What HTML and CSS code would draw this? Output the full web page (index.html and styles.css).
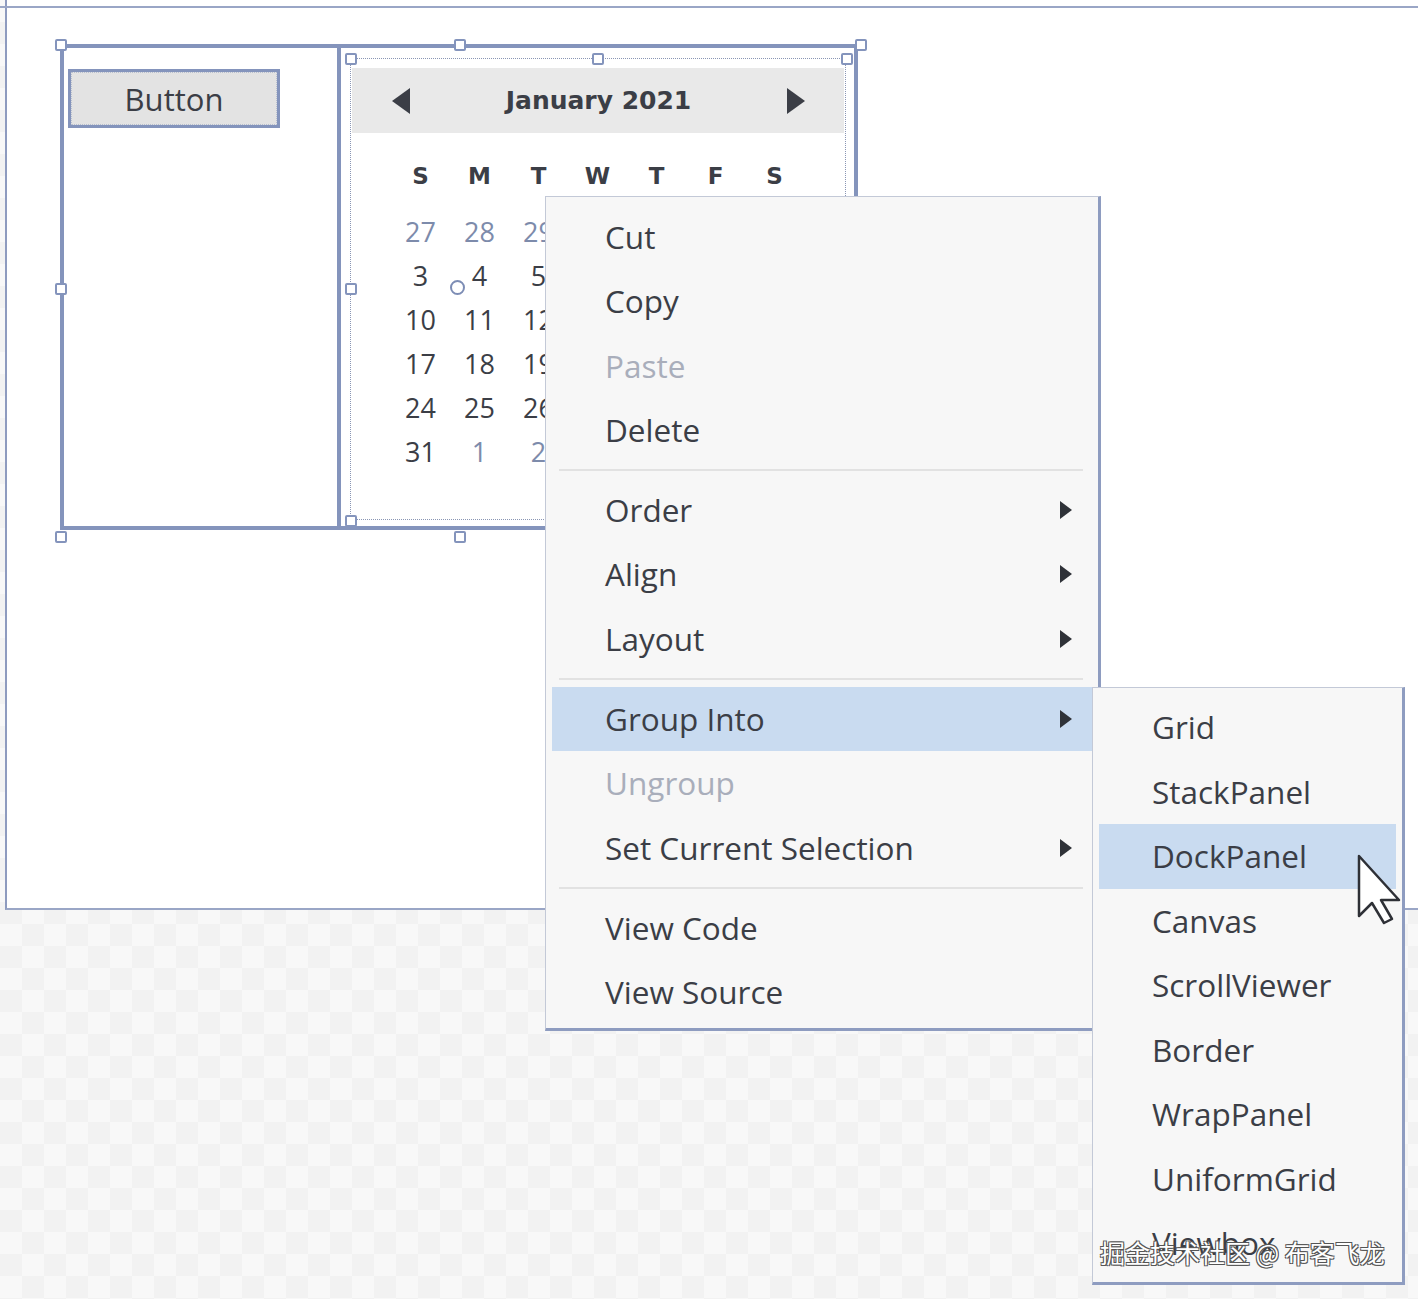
FILE: index.html
```html
<!DOCTYPE html>
<html lang="en">
<head>
    <meta charset="UTF-8">
    <title>Designer - Group Into</title>
    <link rel="stylesheet" href="styles.css">
</head>
<body>
    <div class="stage">
        <div class="window">
            <div class="grid">
                <div class="col-left">
                    <div class="btn">Button</div>
                </div>
                <div class="col-cal">
                    <div class="calendar">
                        <div class="cal-head">
                            <span class="tri tri-left"></span>
                            <span class="cal-title">January 2021</span>
                            <span class="tri tri-right"></span>
                        </div>
                        <div class="cal-week">
                            <span>S</span><span>M</span><span>T</span><span>W</span><span>T</span><span>F</span><span>S</span>
                        </div>
                        <div class="cal-days">
                            <span class="out">27</span><span class="out">28</span><span class="out">29</span><span class="out">30</span><span class="out">31</span><span>1</span><span>2</span>
                            <span>3</span><span>4</span><span>5</span><span>6</span><span>7</span><span>8</span><span>9</span>
                            <span>10</span><span>11</span><span>12</span><span>13</span><span>14</span><span>15</span><span>16</span>
                            <span>17</span><span>18</span><span>19</span><span>20</span><span>21</span><span>22</span><span>23</span>
                            <span>24</span><span>25</span><span>26</span><span>27</span><span>28</span><span>29</span><span>30</span>
                            <span>31</span><span class="out">1</span><span class="out">2</span><span class="out">3</span><span class="out">4</span><span class="out">5</span><span class="out">6</span>
                        </div>
                    </div>
                </div>
            </div>
        </div>

        <!-- selection adorners -->
        <span class="handle" style="left:55px;top:39px"></span>
        <span class="handle" style="left:454px;top:39px"></span>
        <span class="handle" style="left:855px;top:39px"></span>
        <span class="handle" style="left:55px;top:283px"></span>
        <span class="handle" style="left:55px;top:531px"></span>
        <span class="handle" style="left:454px;top:531px"></span>
        <span class="handle" style="left:345px;top:53px"></span>
        <span class="handle" style="left:592px;top:53px"></span>
        <span class="handle" style="left:841px;top:53px"></span>
        <span class="handle" style="left:345px;top:283px"></span>
        <span class="handle" style="left:345px;top:515px"></span>
        <span class="rotate"></span>

        <div class="menu main-menu">
            <div class="item">Cut</div>
            <div class="item">Copy</div>
            <div class="item disabled">Paste</div>
            <div class="item">Delete</div>
            <div class="sep"></div>
            <div class="item sub">Order</div>
            <div class="item sub">Align</div>
            <div class="item sub">Layout</div>
            <div class="sep"></div>
            <div class="item sub active">Group Into</div>
            <div class="item disabled">Ungroup</div>
            <div class="item sub">Set Current Selection</div>
            <div class="sep"></div>
            <div class="item">View Code</div>
            <div class="item">View Source</div>
        </div>

        <div class="menu sub-menu">
            <div class="item">Grid</div>
            <div class="item">StackPanel</div>
            <div class="item active">DockPanel</div>
            <div class="item">Canvas</div>
            <div class="item">ScrollViewer</div>
            <div class="item">Border</div>
            <div class="item">WrapPanel</div>
            <div class="item">UniformGrid</div>
            <div class="item">Viewbox</div>
        </div>

        <svg class="cursor" width="48" height="72" viewBox="0 0 48 72">
            <path d="M2 2 L2 62 L15 49 L27 69 L35 65 L24 46 L42 46 Z" fill="#fff" stroke="#2e3036" stroke-width="2.5" stroke-linejoin="round"/>
        </svg>

        <div class="watermark">掘金技术社区 @ 布客飞龙</div>
    </div>
</body>
</html>
```

FILE: styles.css
```css
* { margin: 0; padding: 0; box-sizing: border-box; }
body { width: 1418px; height: 1299px; overflow: hidden; font-family: 'Open Sans', 'Noto Sans', sans-serif; color: #3b3e46; }

.stage { position: relative; display: flow-root; width: 1418px; height: 1299px; background: repeating-conic-gradient(#f2f2f2 0 25%, #f8f8f8 0 50%) 0 0 / 44px 44px; }

.window { margin-left: 5px; height: 910px; padding-top: 6px; background: #fff; border-left: 2px solid #8e9bbf; border-bottom: 2px solid #9aa6c6; }
.window::before { content: ''; display: block; height: 2px; margin-left: -7px; background: #9aa6c6; }

.grid { display: flex; width: 798px; height: 486px; margin: 36px 0 0 53px; border: 4px solid #8494bc; }
.col-left { width: 277px; border-right: 4px solid #8494bc; }
.col-cal { flex: 1; }

.btn { width: 212px; height: 59px; margin: 21px 0 0 4px; background: #e3e3e3; border: 3px solid #8494bc; outline: 1px dotted #b8bfcf; outline-offset: -4px; font-size: 31px; line-height: 54px; text-align: center; color: #3b3e46; }

.calendar { width: 496px; height: 462px; margin: 10px 0 0 9px; border: 1px dotted #8a96b4; }
.cal-head { display: flex; align-items: center; justify-content: space-between; height: 65px; margin: 9px 1px 0 1px; padding: 0 39px 0 40px; background: #e9e9e9; }
.cal-title { font-family: 'DejaVu Sans', sans-serif; font-weight: bold; font-size: 25px; color: #3b3e46; }
.tri { width: 0; height: 0; border-top: 13px solid transparent; border-bottom: 13px solid transparent; }
.tri-left { border-right: 18px solid #3b3e46; }
.tri-right { border-left: 18px solid #3b3e46; }

.cal-week, .cal-days { display: grid; grid-template-columns: repeat(7, 59px); margin-left: 40px; text-align: center; }
.cal-week { margin-top: 21px; }
.cal-week span { height: 44px; line-height: 44px; font-family: 'DejaVu Sans', sans-serif; font-weight: bold; font-size: 23px; }
.cal-days { margin-top: 12px; }
.cal-days span { height: 44px; line-height: 44px; font-size: 27px; }
.cal-days .out { color: #7d8bab; }

.handle { position: absolute; width: 12px; height: 12px; background: #fff; border: 2px solid #8494bc; border-radius: 2px; }
.rotate { position: absolute; left: 450px; top: 280px; width: 15px; height: 15px; border: 2px solid #7d8db5; border-radius: 50%; background: #fff; }

.menu { position: absolute; background: #f7f7f7; border-left: 1px solid #c3c9d7; border-top: 1px solid #c3c9d7; border-right: 3px solid #8e9cc0; border-bottom: 3px solid #8e9cc0; }
.main-menu { left: 545px; top: 196px; width: 556px; height: 835px; padding-top: 8px; }
.sub-menu { left: 1092px; top: 687px; width: 313px; height: 598px; padding-top: 7px; }

.item { position: relative; height: 64.3px; margin: 0 6px; padding-left: 53px; font-size: 31.5px; line-height: 64px; color: #3b3e46; white-space: nowrap; }
.sub-menu .item { height: 64.5px; }
.item.disabled { color: #a9aebb; }
.item.active { background: #c9dbf0; }
.item.sub::after { content: ''; position: absolute; right: 20px; top: 23px; border-top: 9px solid transparent; border-bottom: 9px solid transparent; border-left: 12px solid #2f3238; }
.sep { height: 2px; margin: 7px 15px 7px 13px; background: #e2e2e2; }

.cursor { position: absolute; left: 1357px; top: 854px; }

.watermark { position: absolute; left: 1100px; top: 1234px; font-family: 'Noto Sans CJK SC', sans-serif; font-size: 25px; color: #fff; text-shadow: 1px 1px 0 #555, -1px -1px 0 #555, 1px -1px 0 #555, -1px 1px 0 #555; }
```
